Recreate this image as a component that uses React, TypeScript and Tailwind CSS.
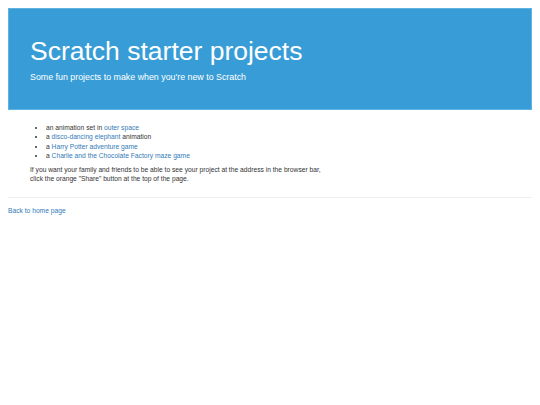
export default function App() {
  return (
    <div className="mx-2 pt-2 font-['Liberation_Sans',Arial,sans-serif] text-[#333]">
      <div className="border border-[#5fb3e3] bg-[#389dd6] pt-[28px] pb-[26px] pl-[21px] text-white">
        <h1 className="text-[26.5px] leading-[29px] font-normal">Scratch starter projects</h1>
        <p className="mt-[4.7px] text-[8.85px] leading-[12px]">Some fun projects to make when you're new to Scratch</p>
      </div>
      <div className="pl-[22px] pt-[13px] text-[6.7px] leading-[9.5px]">
        <ul className="list-disc pl-[16px]">
          <li>an animation set in <a className="text-[#337ab7]" href="#">outer space</a></li>
          <li>a <a className="text-[#337ab7]" href="#">disco-dancing elephant</a> animation</li>
          <li>a <a className="text-[#337ab7]" href="#">Harry Potter adventure game</a></li>
          <li>a <a className="text-[#337ab7]" href="#">Charlie and the Chocolate Factory maze game</a></li>
        </ul>
        <p className="mt-[4px]">
          If you want your family and friends to be able to see your project at the address in the browser bar,
          <br />
          click the orange "Share" button at the top of the page.
        </p>
      </div>
      <hr className="mt-[13px] border-t border-[#eeeeee]" />
      <div className="mt-[8px] text-[6.7px] leading-[9.5px]">
        <a className="text-[#337ab7]" href="#">Back to home page</a>
      </div>
    </div>
  );
}
